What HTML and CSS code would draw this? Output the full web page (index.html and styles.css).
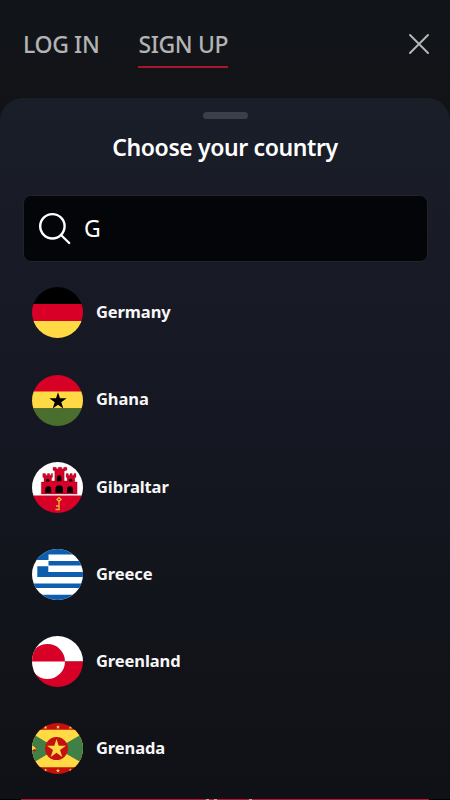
FILE: index.html
```html
<!DOCTYPE html>
<html lang="en">
<head>
<meta charset="utf-8">
<title>Choose your country</title>
<link rel="stylesheet" href="styles.css">
</head>
<body>
<div class="screen">
  <header class="top">
    <nav class="tabs">
      <a class="tab">LOG IN</a>
      <a class="tab active">SIGN UP</a>
    </nav>
    <svg class="close" viewBox="0 0 20 20"><path d="M1 1 19 19M19 1 1 19"/></svg>
  </header>
  <main class="sheet">
    <div class="handle"></div>
    <h1 class="title">Choose your country</h1>
    <div class="search">
      <svg class="lens" viewBox="0 0 32 32"><circle cx="13.4" cy="13.3" r="12.2"/><path d="m22 22 8.2 8"/></svg>
      <span class="query">G</span>
    </div>
    <ul class="list">
      <li class="row">
        <svg class="flag" viewBox="0 0 51 51"><path fill="#000" d="M0 0h51v17H0z"/><path fill="#d80027" d="M0 17h51v17H0z"/><path fill="#ffda44" d="M0 34h51v17H0z"/></svg>
        <span class="name">Germany</span>
      </li>
      <li class="row">
        <svg class="flag" viewBox="0 0 51 51"><path fill="#d80027" d="M0 0h51v17H0z"/><path fill="#ffda44" d="M0 16.500h51v17H0z"/><path fill="#496e2d" d="M0 33.300h51V51H0z"/><path fill="#000" d="m26 17.200 2 6.100h6.600l-5.300 3.900 2 6.300-5.300-3.800-5.300 3.800 2-6.300-5.300-3.900H24z"/></svg>
        <span class="name">Ghana</span>
      </li>
      <li class="row">
        <svg class="flag" viewBox="0 0 51 51"><path fill="#fff" d="M0 0h51v34H0z"/><path fill="#d80027" d="M0 33.500h51V51H0z"/><path class="castle" d="M9.300 32V20H12v-4.200l-1.200-.6v-3.600h2.800v1.700h1.800v-1.700h2.200v1.700h1.700v-1.700h1.300v3.600l-1 .6V19h3.200V9l-1.800-.8V5.300h3.300v1.500h2V5.300h3.400v1.500h2V5.300h3.200v2.900L32.200 9v10h2.900v-3.200l-1-.6v-3.600h2.200v1.700h1.700v-1.700h2.200v1.700h1.700v-1.700h2.100v3.600l-1.200.6V20h2.300v12z"/><path fill="#000" d="M13.200 31v-3.800a3 3 0 0 1 6 0V31zM23.400 31v-4a3.800 3.800 0 0 1 7.600 0v4zM35 31v-3.800a3 3 0 0 1 6 0V31zM24.900 19.300v-3.700a2.300 2.300 0 0 1 4.600 0v3.700zM14 19.600v-1.200a1.700 1.700 0 0 1 3.400 0v1.200zM37 19.600v-1.200a1.700 1.700 0 0 1 3.400 0v1.200z"/><path class="key" d="M27 39.500V47.500H23.500M27 44h-3M27 35.600l2 1.900-2 1.900-2-1.900z"/></svg>
        <span class="name">Gibraltar</span>
      </li>
      <li class="row">
        <svg class="flag" viewBox="0 0 51 51"><path fill="#fff" d="M0 0h51v51H0z"/><path fill="#0d5eaf" d="M0 0h51v5.500H16.500V11H0zM16.500 12H51v4.400H16.500zM5.300 17.300h11V23H51v5H5.300zM0 34.500h51v4.600H0zM0 45.700h51V51H0z"/></svg>
        <span class="name">Greece</span>
      </li>
      <li class="row">
        <svg class="flag" viewBox="0 0 51 51"><path fill="#fff" d="M0 0h51v25.500H0z"/><path fill="#d80027" d="M0 25.500h51V51H0zM-2 25.500a17.500 17.500 0 0 1 35 0z"/><path fill="#fff" d="M-2 25.500a17.500 17.500 0 0 0 35 0z"/></svg>
        <span class="name">Greenland</span>
      </li>
      <li class="row">
        <svg class="flag" viewBox="0 0 51 51"><path fill="#c51010" d="M0 0h51v51H0z"/><path fill="#ffda44" d="M0 6.700h51v37.600H0z"/><path fill="#408046" d="M0 10.500 25 25.500 0 40.500zM51 10.500 25 25.500l26 15z"/><circle cx="24.500" cy="25.600" r="11.500" fill="#c51010"/><path fill="#ffda44" d="m24.500 16 2.200 6.800h7.200L28 27l2.300 6.900-5.800-4.200-5.800 4.200L21 27l-5.900-4.200h7.200z"/><path fill="#ffda44" d="m26 2 .6 1.400H28L26.900 4.300l.4 1.500L26 5l-1.300.8.4-1.500L24 3.400h1.400zM26 45.600l.6 1.400H28l-1.100.9.4 1.500-1.300-.8-1.300.8.4-1.500L24 47h1.400zM13.500 2.500l.6 1.300h1.300l-1.100.8.4 1.300-1.200-.7-1.200.7.4-1.300-1.100-.8h1.300zM38.500 2.500l.6 1.300h1.300l-1.100.8.4 1.300-1.200-.7-1.200.7.4-1.300-1.100-.8h1.300zM13.500 45.500l.6 1.300h1.300l-1.100.8.4 1.300-1.200-.7-1.200.7.4-1.300-1.100-.8h1.300zM38.500 45.500l.6 1.300h1.300l-1.100.8.4 1.300-1.200-.7-1.200.7.4-1.300-1.100-.8h1.300zM0 22.500c2 .5 4 2.500 4 4.500H0z"/><circle cx="2.500" cy="27.300" r="1.300" fill="#c51010"/></svg>
        <span class="name">Grenada</span>
      </li>
    </ul>
  </main>
  <footer class="edge"><span class="letters"><i></i><i></i><i></i></span></footer>
</div>
</body>
</html>
```
FILE: styles.css
```css
* { box-sizing: border-box; }
body { margin: 0; background: #000; font-family: "Noto Sans", sans-serif; }
.screen { width: 450px; height: 800px; overflow: hidden; background: linear-gradient(#11151a 0, #121317 98px, #111217 130px, #000 400px); display: flex; flex-direction: column; }
.top { height: 98px; flex: none; display: flex; justify-content: space-between; padding: 27px 21px 0 23px; }
.tabs { display: flex; gap: 39px; height: 41px; }
.tab { font-size: 23px; line-height: 35px; font-weight: 500; letter-spacing: -0.36px; color: #b3b3b3; white-space: nowrap; }
.active { border-bottom: 2px solid #a5182b; }
.close { width: 20px; height: 20px; margin-top: 7px; overflow: visible; fill: none; stroke: #b5b5b5; stroke-width: 2; stroke-linecap: round; }
.sheet { height: 701px; flex: none; overflow: hidden; padding: 14px 22px 0 23px; border-radius: 23px 23px 0 0; background: linear-gradient(#1a1e28 0, #181b26 22%, #151822 45%, #111319 82%, #101116 100%); }
.handle { width: 45px; height: 7px; margin: 0 auto; border-radius: 4px; background: #3c3f49; }
.title { margin: 12px 1px 0 0; font-size: 23px; line-height: 32px; font-weight: 600; letter-spacing: -0.39px; color: #fff; text-align: center; white-space: nowrap; }
.search { height: 67px; margin-top: 32px; padding-left: 15px; display: flex; align-items: center; border: 1px solid #20232c; border-radius: 8px; background: #040508; }
.lens { width: 32px; height: 32px; overflow: visible; fill: none; stroke: #fff; stroke-width: 2.4; stroke-linecap: round; }
.query { margin: -2px 0 0 13px; font-size: 23px; line-height: 32px; color: #fff; }
.list { list-style: none; margin: 25.35px 0 0; padding: 0 0 0 9px; display: flex; flex-direction: column; gap: 36.2px; }
.row { display: flex; align-items: center; height: 51px; }
.flag { width: 51px; height: 51px; border-radius: 50%; flex: none; }
.castle { fill: #d80027; stroke: #5b1020; stroke-width: .3; }
.key { fill: none; stroke: #e6b435; stroke-width: 1.4; }
.name { margin: -1.3px 0 0 13px; font-size: 16.5px; line-height: 24px; font-weight: 700; letter-spacing: -0.1px; color: #f7f7f7; white-space: nowrap; }
.edge { height: 1px; flex: none; margin: 0 21px; background: #b81630; display: flex; }
.letters { display: flex; gap: 5px; margin-left: 185px; }
.letters i { width: 3px; height: 1px; background: #a9b0b8; }
.letters i:last-child { margin-left: 27px; }
```
